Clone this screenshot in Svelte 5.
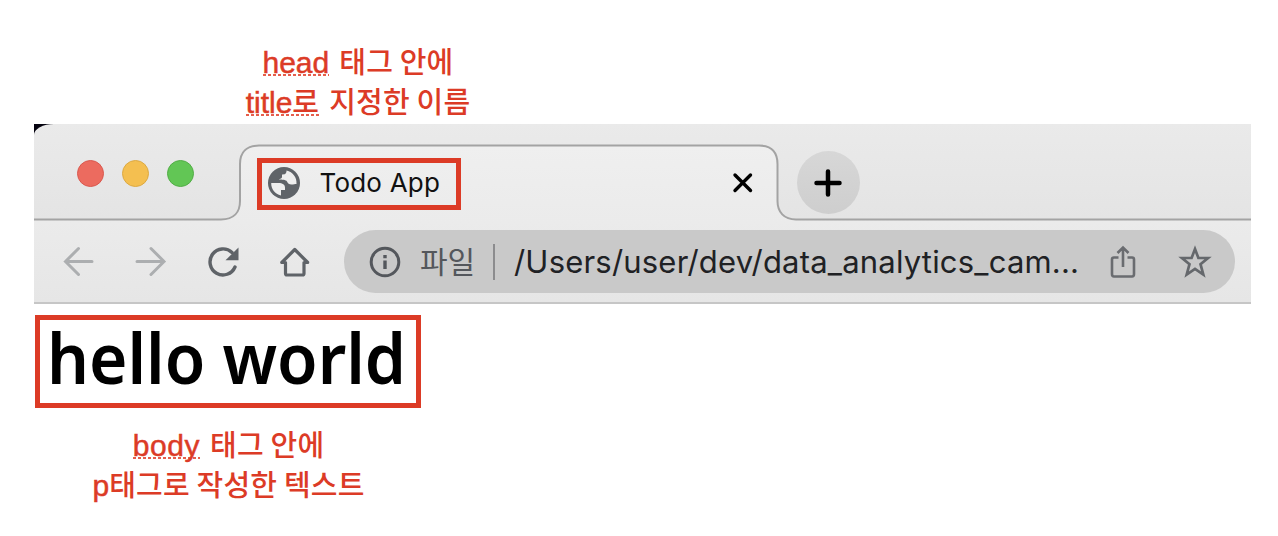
<script>
  const lights = ['red', 'yellow', 'green'];
</script>

<main>
  <div class="note top">
    <div><span class="en dotted">head</span><span class="ko gap">태그 안에</span></div>
    <div><span class="dotted"><span class="en">title</span><span class="ko">로</span></span><span class="ko gap">지정한 이름</span></div>
  </div>

  <section class="window">
    <div class="strip">
      <svg class="edge" width="1217" height="98" viewBox="0 0 1217 98">
        <defs>
          <linearGradient id="tab" x1="0" y1="0" x2="0" y2="1">
            <stop offset="0" stop-color="#efefef" />
            <stop offset="1" stop-color="#ebebeb" />
          </linearGradient>
        </defs>
        <path fill="url(#tab)" d="M0 98V95.500H187C200 95.500 206 88 206 77V40C206 28 213 21.500 225 21.500H725C737 21.500 743.500 28 743.500 40V77C743.500 88 750 95.500 762 95.500H1217V98Z" />
        <path fill="none" stroke="#a3a3a3" stroke-width="2" d="M0 95.500H187C200 95.500 206 88 206 77V40C206 28 213 21.500 225 21.500H725C737 21.500 743.500 28 743.500 40V77C743.500 88 750 95.500 762 95.500H1217" />
      </svg>
      <div class="tabs">
        <div class="lights">
          {#each lights as light}<i class={light}></i>{/each}
        </div>
        <div class="marked title">
          <svg width="34" height="34" viewBox="0 0 34 34">
            <circle cx="17" cy="17" r="16" fill="#5f6368" />
            <path fill="#eee" d="M4.200 17H11.500C15.500 17 18 18.500 18 21.500V24H14V29.500C8 28 4 23 4.200 17Z" />
            <path fill="#eee" d="M19.500 4.500C19.500 8 18 8.500 15 8.500V11C15 12.500 13 12.800 12 13.500C14.500 14 19 13.500 20 15.500C20.800 17.500 22 18.500 24.500 18.500C26.500 18.500 28 18 29.500 18C30 11.500 26 6 19.500 4.500Z" />
          </svg>
          <span>Todo App</span>
        </div>
        <svg class="close" width="22" height="22" viewBox="0 0 22 22"><path d="M3 3L18.500 18.500M18.500 3L3 18.500" stroke="#000" stroke-width="3.400" stroke-linecap="round" /></svg>
        <div class="add">
          <svg width="28" height="28" viewBox="0 0 28 28"><path d="M14 2.500V25.500M2.500 14H25.500" stroke="#000" stroke-width="4.500" stroke-linecap="round" /></svg>
        </div>
      </div>
    </div>

    <div class="toolbar">
      <svg class="nav" width="36" height="36" viewBox="0 0 36 36" fill="none" stroke="#acaeb0" stroke-width="3" stroke-linecap="round"><path d="M17.500 4.500L4.500 17.500L17.500 30.500M4.500 17.500H31" /></svg>
      <svg class="nav" width="36" height="36" viewBox="0 0 36 36" fill="none" stroke="#acaeb0" stroke-width="3" stroke-linecap="round"><path d="M18 4.500L31 17.500L18 30.500M31 17.500H4" /></svg>
      <svg class="nav" width="36" height="36" viewBox="0 0 36 36"><path d="M30 23A13 13 0 1 1 27 8.500" fill="none" stroke="#5f6368" stroke-width="3.400" stroke-linecap="round" /><path d="M33.500 3.500V16.200H20.500Z" fill="#5f6368" /></svg>
      <svg class="nav" width="36" height="36" viewBox="0 0 36 36" fill="none" stroke="#5f6368" stroke-width="3.200" stroke-linecap="round"><path d="M4.800 18.500H8.500V29.500Q8.500 31 10 31H25.500Q27 31 27 29.500V18.500H30.700L17.750 5.500Z" stroke-linejoin="round" /></svg>

      <div class="address">
        <svg class="info" width="32" height="32" viewBox="0 0 32 32"><circle cx="16" cy="16" r="13.800" fill="none" stroke="#54575c" stroke-width="3" /><path d="M14.300 9h3.400v3.300h-3.400zM14.300 14.500h3.400V23h-3.400z" fill="#54575c" /></svg>
        <span class="file">파일</span>
        <span class="rule"></span>
        <span class="url">/Users/user/dev/data_analytics_cam...</span>
        <svg class="share" width="28" height="34" viewBox="0 0 28 34" fill="none" stroke="#6a6c70" stroke-width="2.600"><path d="M9.500 12.500H5Q3 12.500 3 14.500V29Q3 31.500 5 31.500H23Q25 31.500 25 29V14.500Q25 12.500 23 12.500H18.500M14 22V3M8.500 8L14 2.500L19.500 8" /></svg>
        <svg class="star" width="34" height="34" viewBox="0 0 34 34"><path d="M17 4L20.400 13H30L22.500 19.200L25.300 29.500L17 23.800L8.700 29.500L11.500 19.200L4 13H13.600Z" fill="none" stroke="#65686c" stroke-width="2.700" /></svg>
      </div>
    </div>
  </section>

  <div class="marked hello"><span>hello world</span></div>

  <div class="note bottom">
    <div><span class="en dotted wide">body</span><span class="ko gap">태그 안에</span></div>
    <div><span class="en">p</span><span class="ko">태그로 작성한 텍스트</span></div>
  </div>
</main>

<style>
  :global(body) { margin: 0; background: #fff; }
  main { box-sizing: border-box; width: 1278px; height: 536px; padding: 40px 27px 0 34px; overflow: hidden; }
  svg { display: block; flex: none; }
  .note { color: #dc3b26; text-align: center; white-space: nowrap; }
  .note > div { height: 40px; line-height: 40px; }
  .en { font: 30px/40px "Liberation Sans", sans-serif; -webkit-text-stroke: .5px #dc3b26; }
  .ko { font: 500 29px/40px "Noto Sans CJK KR", sans-serif; letter-spacing: .2px; }
  .wide { letter-spacing: .6px; }
  .gap { margin-left: 10px; }
  .dotted { display: inline-block; height: 40px; vertical-align: top; background: repeating-linear-gradient(90deg, #e65e4c 0 3px, transparent 3px 5px) 0 34px / 100% 2px no-repeat; }
  .en.dotted { line-height: 45px; }
  .top { width: 648px; height: 84px; }
  .bottom { width: 389px; margin-top: 15px; }
  .window { width: 1217px; height: 180px; background: #05030f; }
  .strip { display: grid; height: 97px; background: linear-gradient(#eaeaea, #e4e4e4); border-radius: 20px 0 0 0 / 11px 0 0 0; }
  .edge, .tabs { grid-area: 1 / 1; }
  .tabs { display: flex; align-items: flex-start; }
  .lights { display: flex; gap: 18px; margin: 36px 0 0 42.500px; }
  .lights i { box-sizing: border-box; width: 27px; height: 27px; border-radius: 50%; border: 1px solid; }
  .red { background: #ec6b5f; border-color: #d9584e !important; }
  .yellow { background: #f4bf50; border-color: #dca942 !important; }
  .green { background: #62c655; border-color: #52ad46 !important; }
  .marked { box-sizing: border-box; border: 5px solid #dc3b26; display: flex; align-items: center; white-space: nowrap; }
  .title { width: 204px; height: 52px; margin: 34px 0 0 63.500px; padding: 0 0 2px 5px; gap: 18.500px; font: 26px/36px Inter, sans-serif; letter-spacing: .2px; color: #111; }
  .close { margin: 48px 0 0 271px; }
  .add { display: flex; align-items: center; justify-content: center; width: 63px; height: 63px; margin: 27px 0 0 42.500px; border-radius: 50%; background: linear-gradient(#d7d7d7, #cecece); }
  .toolbar { box-sizing: border-box; display: flex; align-items: flex-start; height: 83px; padding: 9px 16px 0 27px; background: linear-gradient(#ebebeb, #e6e6e6); border-bottom: 2px solid #c6c6c6; }
  .nav { margin: 14px 36px 0 0; }
  .address { box-sizing: border-box; display: flex; align-items: center; width: 891px; height: 63px; margin-left: -5px; padding-left: 25px; border-radius: 32px; background: #c9c9c9; }
  .file { width: 54px; margin-left: 19px; padding-bottom: 4px; font: 30px/40px "Noto Sans CJK KR", sans-serif; white-space: nowrap; color: #54575c; }
  .rule { width: 2px; height: 36px; margin: 0 19px; background: #8c8c8e; }
  .url { width: 564px; font: 31px/40px Inter, sans-serif; letter-spacing: .2px; color: #202124; white-space: nowrap; }
  .share { margin-left: 31px; }
  .star { margin-left: 41px; }
  .hello { width: 386px; height: 93px; margin: 11px 0 0 1px; padding: 0 0 9px 7px; font: 600 70px/80px "Noto Sans", sans-serif; color: #000; }
  .hello span { transform: scaleX(.94); transform-origin: left; }
</style>
